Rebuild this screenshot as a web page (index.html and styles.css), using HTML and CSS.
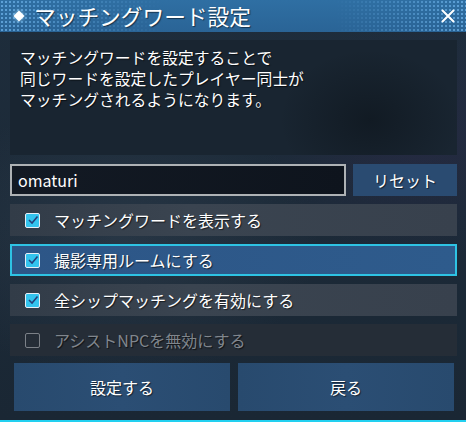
FILE: index.html
```html
<!DOCTYPE html>
<html lang="ja">
<head>
    <meta charset="UTF-8">
    <meta name="viewport" content="width=device-width, initial-scale=1.0">
    <title>マッチングワード設定</title>
    <link rel="stylesheet" href="styles.css">
</head>
<body>

    <div class="window">
        <div class="titlebar">
            <svg class="title-mark" width="12" height="12" viewBox="0 0 12 12">
                <polygon points="6,0.5 11.5,6 6,11.5 0.5,6" fill="#ffffff"/>
            </svg>
            <h1>マッチングワード設定</h1>
            <svg class="close" width="14" height="14" viewBox="0 0 14 14">
                <path d="M1 1 L13 13 M13 1 L1 13" stroke="#ffffff" stroke-width="2" fill="none"/>
            </svg>
        </div>

        <div class="content">
            <div class="desc">
                マッチングワードを設定することで<br>
                同じワードを設定したプレイヤー同士が<br>
                マッチングされるようになります。
            </div>

            <div class="word-row">
                <input class="word-input" type="text" value="omaturi">
                <button class="reset">リセット</button>
            </div>

            <!-- option rows -->
            <div class="options">
                <div class="option">
                    <span class="check checked"></span>
                    <span>マッチングワードを表示する</span>
                </div>
                <div class="option selected">
                    <span class="check checked"></span>
                    <span>撮影専用ルームにする</span>
                </div>
                <div class="option">
                    <span class="check checked"></span>
                    <span>全シップマッチングを有効にする</span>
                </div>
                <div class="option disabled">
                    <span class="check"></span>
                    <span>アシストNPCを無効にする</span>
                </div>
            </div>

            <div class="actions">
                <button class="action">設定する</button>
                <button class="action">戻る</button>
            </div>
        </div>
    </div>

</body>
</html>
```

FILE: styles.css
```css
body {
    margin: 0;
    padding: 0;
    background: #1b2937;
    font-family: "Noto Sans CJK JP", "Noto Sans", sans-serif;
    color: #ffffff;
}
.window {
    width: 466px;
    height: 422px;
    box-sizing: border-box;
    border-bottom: 2px solid #22d0f0;
    background:
        radial-gradient(ellipse 160px 120px at 420px 140px, rgba(60, 40, 90, 0.25), transparent),
        radial-gradient(ellipse 200px 140px at 120px 240px, rgba(90, 110, 130, 0.18), transparent),
        linear-gradient(#1e2d3c, #1a2734);
    overflow: hidden;
}

/* Title bar */
.titlebar {
    position: relative;
    height: 32px;
    display: flex;
    align-items: center;
    padding: 0 11px 0 13px;
    background: linear-gradient(#2f6fa3, #2a6496);
}
.titlebar::before {
    content: "";
    position: absolute;
    inset: 0;
    background-image: radial-gradient(circle, rgba(110, 180, 235, 0.75) 1px, transparent 1.4px);
    background-size: 4px 4px;
    -webkit-mask-image: linear-gradient(90deg, #000 0, rgba(0, 0, 0, 0.5) 15%, transparent 35%, transparent 72%, #000 100%);
    mask-image: linear-gradient(90deg, #000 0, rgba(0, 0, 0, 0.5) 15%, transparent 35%, transparent 72%, #000 100%);
}
.title-mark {
    position: relative;
    margin-right: 9px;
    filter: drop-shadow(0 0 2px rgba(180, 230, 255, 0.8));
}
.titlebar h1 {
    position: relative;
    margin: 0;
    font-size: 21.7px;
    font-weight: normal;
    line-height: 32px;
    flex: 1;
    text-shadow: 1px 1px 1px rgba(0, 0, 0, 0.5);
}
.close {
    position: relative;
}

.content {
    padding: 8px 9px 0 10px;
}

.desc {
    height: 115px;
    box-sizing: border-box;
    padding: 7px 10px;
    background:
        radial-gradient(ellipse 90px 70px at 360px 80px, rgba(10, 16, 22, 0.5), transparent),
        #192531;
    font-size: 15.8px;
    line-height: 21px;
    text-shadow: 1px 1px 1px rgba(0, 0, 0, 0.6);
}

/* Word input */
.word-row {
    display: flex;
    gap: 7px;
    margin-top: 9px;
}
.word-input {
    width: 336px;
    height: 32px;
    box-sizing: border-box;
    border: 2px solid #aeb2b5;
    background: linear-gradient(90deg, #131a24, #0e141d);
    color: #ffffff;
    font-family: inherit;
    font-size: 16px;
    padding: 0 6px;
    outline: none;
}
.reset {
    flex: 1;
    height: 32px;
    border: none;
    background: #2a4b71;
    color: #ffffff;
    font-family: inherit;
    font-size: 16px;
    text-shadow: 1px 1px 1px rgba(0, 0, 0, 0.6);
}

/* Options */
.options {
    display: flex;
    flex-direction: column;
    gap: 8px;
    margin-top: 8px;
}
.option {
    height: 32px;
    box-sizing: border-box;
    display: flex;
    align-items: center;
    gap: 14px;
    padding-left: 15px;
    background: linear-gradient(90deg, #323c48, #3a4450 40%, #38414d);
    font-size: 16px;
    text-shadow: 1px 1px 1px rgba(0, 0, 0, 0.6);
}
.option.selected {
    border: 2px solid #2ec3e4;
    padding-left: 13px;
    background: linear-gradient(90deg, #2d5687, #2e5b8c);
}
.option.disabled {
    background: #252d37;
    color: #80868d;
}
.check {
    width: 15px;
    height: 15px;
    box-sizing: border-box;
    border: 1.5px solid #7c8188;
    border-radius: 2px;
    flex: none;
}
.check.checked {
    border-color: #e6eef6;
    background:
        url("data:image/svg+xml;utf8,<svg xmlns='http://www.w3.org/2000/svg' width='12' height='12' viewBox='0 0 12 12'><path d='M2 6 L5 9 L10.5 2.5' stroke='%2324407a' stroke-width='1.6' fill='none'/></svg>") center / 12px 12px no-repeat,
        #33c4ee;
}

/* Bottom buttons */
.actions {
    display: flex;
    gap: 8px;
    padding: 0 3px 0 4px;
    margin-top: 7px;
}
.action {
    flex: 1;
    height: 48px;
    border: none;
    background: linear-gradient(90deg, #284a6e, #2b4e74 50%, #284a6e);
    color: #ffffff;
    font-family: inherit;
    font-size: 16px;
    text-shadow: 1px 1px 1px rgba(0, 0, 0, 0.6);
}
```
